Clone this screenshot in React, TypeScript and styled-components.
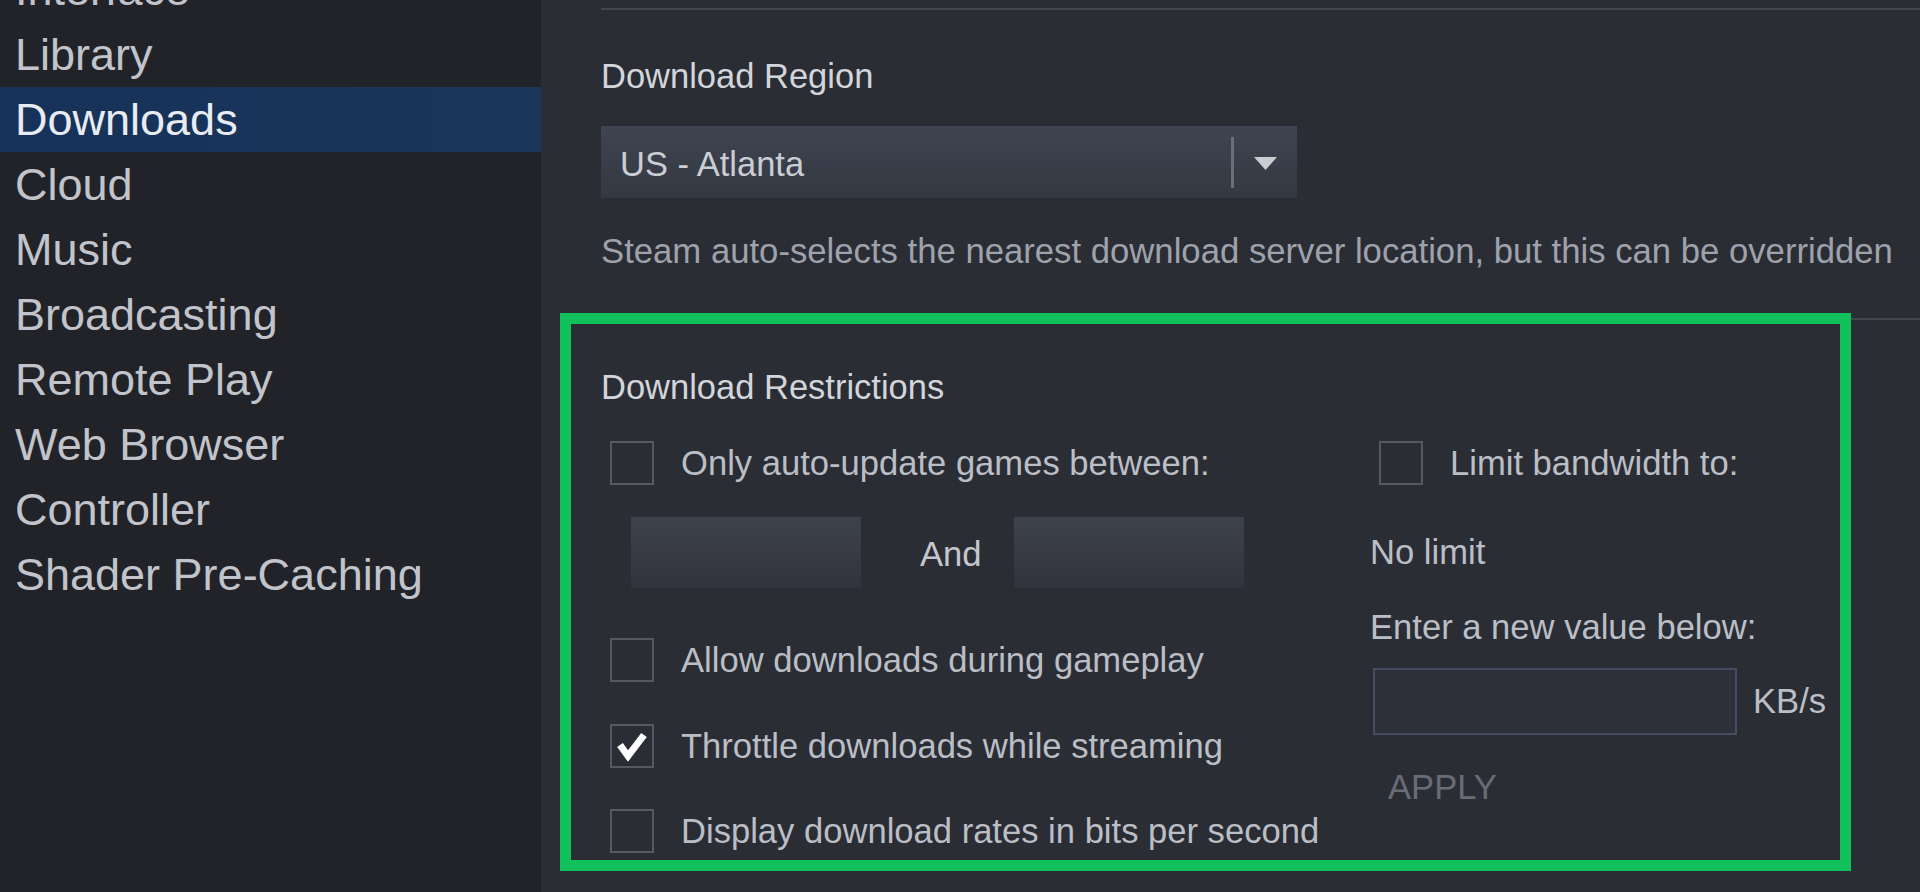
import styled, { createGlobalStyle } from "styled-components";

const GlobalStyle = createGlobalStyle`
  html, body {
    margin: 0;
    padding: 0;
    background: #2b2d35;
    overflow: hidden;
  }
  * {
    box-sizing: border-box;
  }
`;

const Page = styled.div`
  display: flex;
  width: 1920px;
  height: 892px;
  font-family: "Liberation Sans", Arial, sans-serif;
  overflow: hidden;
`;

const Sidebar = styled.nav`
  width: 541px;
  flex-shrink: 0;
  background: #212329;
`;

const NavList = styled.ul`
  list-style: none;
  margin: -43px 0 0;
  padding: 0;
`;

const NavItem = styled.li<{ $active?: boolean }>`
  height: 65px;
  line-height: 65px;
  padding-left: 15px;
  font-size: 45px;
  color: ${(p) => (p.$active ? "#e8ecf1" : "#c1c4ca")};
  background: ${(p) =>
    p.$active ? "linear-gradient(90deg, #17325a 0%, #1a3659 100%)" : "transparent"};
  white-space: nowrap;
`;

const Main = styled.main`
  position: relative;
  flex: 1;
  background: #2b2d35;
  padding-left: 60px;
  display: flex;
  flex-direction: column;
`;

const Rule = styled.div<{ $top: number }>`
  height: 2px;
  margin-top: ${(p) => p.$top}px;
  background: #44464e;
`;

const SectionTitle = styled.div<{ $top: number }>`
  margin-top: ${(p) => p.$top}px;
  font-size: 34.5px;
  line-height: 40px;
  color: #d2d5da;
`;

const Select = styled.div`
  margin-top: 30px;
  width: 696px;
  height: 72px;
  display: flex;
  align-items: center;
  padding-left: 19px;
  background: linear-gradient(180deg, #3f4451 0%, #343842 100%);
  font-size: 34.5px;
  color: #caced4;
`;

const SelectValue = styled.span`
  flex: 1;
  padding-top: 4px;
`;

const SelectDivider = styled.span`
  width: 3px;
  height: 51px;
  background: #6b6f78;
`;

const SelectArrow = styled.span`
  width: 63px;
  display: flex;
  justify-content: center;
  padding-top: 2px;
`;

const Description = styled.div`
  margin-top: 33px;
  font-size: 34.7px;
  line-height: 40px;
  color: #9ea2ab;
  white-space: nowrap;
`;

const Columns = styled.div`
  margin-top: 34px;
  display: flex;
`;

const LeftColumn = styled.div`
  width: 769px;
  display: flex;
  flex-direction: column;
`;

const RightColumn = styled.div`
  display: flex;
  flex-direction: column;
`;

const CheckRow = styled.label<{ $top: number }>`
  display: flex;
  align-items: center;
  margin-top: ${(p) => p.$top}px;
  margin-left: 9px;
  height: 44px;
  gap: 27px;
  font-size: 34.6px;
  color: #babec5;
  white-space: nowrap;
`;

const Box = styled.span`
  width: 44px;
  height: 44px;
  flex-shrink: 0;
  border: 2px solid #56595f;
  display: flex;
  align-items: center;
  justify-content: center;
`;

const TimeRow = styled.div`
  display: flex;
  align-items: center;
  margin-top: 32px;
  margin-left: 30px;
`;

const TimeField = styled.div`
  width: 230px;
  height: 71px;
  background: linear-gradient(180deg, #3e424c 0%, #31343c 100%);
`;

const AndText = styled.span`
  margin: 4px 32px 0 59px;
  font-size: 34.6px;
  color: #c4c8ce;
`;

const Text = styled.div<{ $top: number; $color?: string; $indent?: number }>`
  margin-top: ${(p) => p.$top}px;
  margin-left: ${(p) => p.$indent ?? 0}px;
  font-size: 34.6px;
  line-height: 40px;
  color: ${(p) => p.$color ?? "#babec5"};
  white-space: nowrap;
`;

const InputRow = styled.div`
  margin-top: 21px;
  display: flex;
  align-items: center;
  gap: 16px;
`;

const RateInput = styled.div`
  margin-left: 3px;
  width: 364px;
  height: 67px;
  border: 2px solid #464c62;
  background: #2f313a;
`;

const Unit = styled.span`
  font-size: 34.6px;
  color: #babec5;
`;

const Highlight = styled.div`
  position: absolute;
  left: 19px;
  top: 313px;
  width: 1291px;
  height: 558px;
  border: 11px solid #10c05b;
  pointer-events: none;
`;

const navItems = [
  "Interface",
  "Library",
  "Downloads",
  "Cloud",
  "Music",
  "Broadcasting",
  "Remote Play",
  "Web Browser",
  "Controller",
  "Shader Pre-Caching",
];

function Checkbox({ checked }: { checked?: boolean }) {
  return (
    <Box>
      {checked && (
        <svg width="32" height="32" viewBox="0 0 32 32">
          <polyline
            points="4,15 12,26 28,5"
            fill="none"
            stroke="#ffffff"
            strokeWidth="7"
            strokeLinejoin="miter"
          />
        </svg>
      )}
    </Box>
  );
}

export default function App() {
  return (
    <>
      <GlobalStyle />
      <Page>
        <Sidebar>
          <NavList>
            {navItems.map((item) => (
              <NavItem key={item} $active={item === "Downloads"}>
                {item}
              </NavItem>
            ))}
          </NavList>
        </Sidebar>
        <Main>
          <Rule $top={8} />
          <SectionTitle $top={46}>Download Region</SectionTitle>
          <Select>
            <SelectValue>US - Atlanta</SelectValue>
            <SelectDivider />
            <SelectArrow>
              <svg width="23" height="13" viewBox="0 0 23 13">
                <polygon points="0,0 23,0 11.5,13" fill="#c9ccd1" />
              </svg>
            </SelectArrow>
          </Select>
          <Description>
            Steam auto-selects the nearest download server location, but this can be overridden
          </Description>
          <Rule $top={47} />
          <SectionTitle $top={47}>Download Restrictions</SectionTitle>
          <Columns>
            <LeftColumn>
              <CheckRow $top={0}>
                <Checkbox />
                Only auto-update games between:
              </CheckRow>
              <TimeRow>
                <TimeField />
                <AndText>And</AndText>
                <TimeField />
              </TimeRow>
              <CheckRow $top={50}>
                <Checkbox />
                Allow downloads during gameplay
              </CheckRow>
              <CheckRow $top={42}>
                <Checkbox checked />
                Throttle downloads while streaming
              </CheckRow>
              <CheckRow $top={41}>
                <Checkbox />
                Display download rates in bits per second
              </CheckRow>
            </LeftColumn>
            <RightColumn>
              <CheckRow $top={0}>
                <Checkbox />
                Limit bandwidth to:
              </CheckRow>
              <Text $top={47}>No limit</Text>
              <Text $top={35}>Enter a new value below:</Text>
              <InputRow>
                <RateInput />
                <Unit>KB/s</Unit>
              </InputRow>
              <Text $top={32} $indent={18} $color="#686c74">
                APPLY
              </Text>
            </RightColumn>
          </Columns>
          <Highlight />
        </Main>
      </Page>
    </>
  );
}
